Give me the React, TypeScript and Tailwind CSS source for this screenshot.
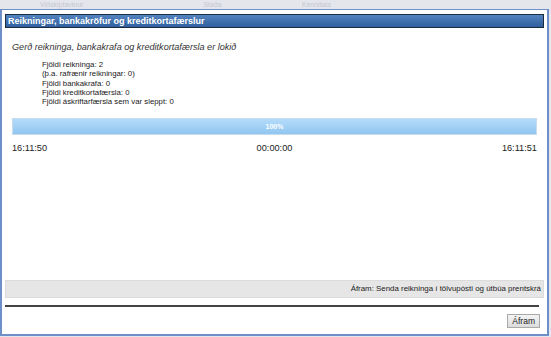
export default function App() {
  return (
    <div className="relative w-[551px] h-[337px] overflow-hidden bg-[#e4e6ec] font-['Liberation_Sans',Arial,sans-serif]">
      {/* background page peeking above the dialog */}
      <div className="flex h-[9px] items-center text-[7px] leading-none text-[#c4c7d0]">
        <span className="ml-[40px]">Viðskiptavinur</span>
        <span className="ml-[120px]">Staða</span>
        <span className="ml-[80px]">Kennitala</span>
      </div>

      {/* dialog */}
      <div className="absolute left-0 top-[9px] w-[549px] h-[327px] border-2 border-t border-[#6f8fc9] bg-white flex flex-col">
        <div className="mx-[3px] mt-[4px] h-[14px] border border-[#1c2b40] bg-gradient-to-b from-[#5484c0] to-[#2f5f9c] px-[2px] flex items-center">
          <span className="text-[9px] font-bold text-white leading-none">Reikningar, bankakröfur og kreditkortafærslur</span>
        </div>

        <div className="mt-[15px] ml-[10px] text-[9.1px] italic text-[#333] leading-none">
          Gerð reikninga, bankakrafa og kreditkortafærsla er lokið
        </div>

        <div className="mt-[8px] ml-[40px] text-[7.8px] text-[#1a1a1a] leading-[9.2px]">
          <div>Fjöldi reikninga: 2</div>
          <div>(þ.a. rafrænir reikningar: 0)</div>
          <div>Fjöldi bankakrafa: 0</div>
          <div>Fjöldi kreditkortafærsla: 0</div>
          <div>Fjöldi áskriftarfærsla sem var sleppt: 0</div>
        </div>

        <div className="mt-[12px] mx-[10px] h-[17px] border border-[#c8dcee] bg-gradient-to-b from-[#b3dbfa] to-[#92c6f0] flex items-center justify-center">
          <span className="text-[7px] font-bold text-white leading-none">100%</span>
        </div>

        <div className="mt-[9px] mx-[10px] flex justify-between text-[9.2px] text-[#222] leading-none">
          <span>16:11:50</span>
          <span>00:00:00</span>
          <span>16:11:51</span>
        </div>

        <div className="flex-1" />

        <div className="mx-[3px] h-[18px] border border-[#dcdcdc] bg-[#e6e6e6] flex items-center justify-end pr-[2px]">
          <span className="text-[7.9px] text-[#222] leading-none">Áfram: Senda reikninga í tölvupósti og útbúa prentskrá</span>
        </div>

        <div className="mt-[7px] ml-[3px] mr-[8px] h-[2px] bg-[#444]" />

        <div className="mt-[7px] mr-[7px] flex justify-end">
          <button className="h-[14px] px-[4px] border border-[#a9a9a9] bg-gradient-to-b from-[#f4f4f4] to-[#dcdcdc] text-[8.5px] leading-none text-[#222]">
            Áfram
          </button>
        </div>

        <div className="h-[6px]" />
      </div>
    </div>
  )
}
